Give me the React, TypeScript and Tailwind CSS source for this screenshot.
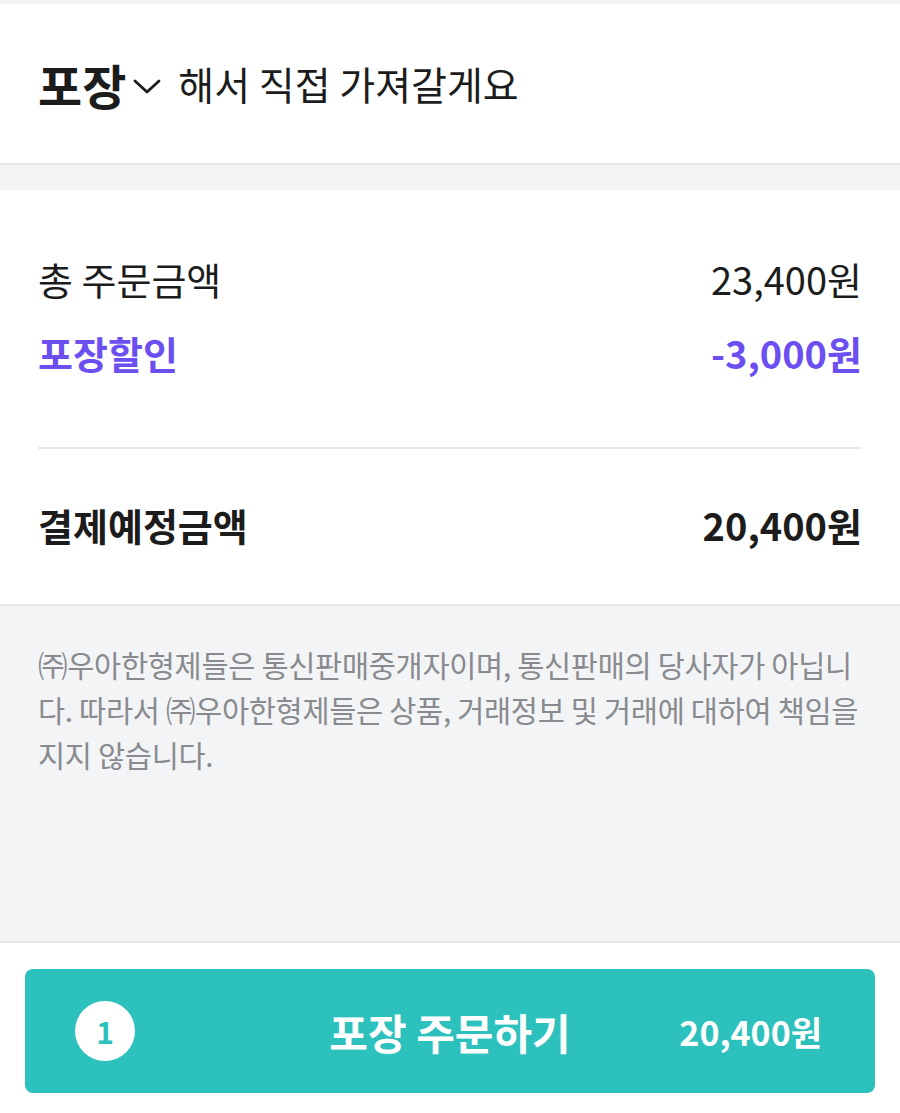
import React from 'react';

const font = { fontFamily: '"Noto Sans CJK KR", "Noto Sans", sans-serif' };

const Row: React.FC<{ label: string; value: string; className?: string }> = ({ label, value, className }) => (
  <div className={`flex justify-between items-center h-[46px] text-[38px] ${className ?? ''}`}>
    <span>{label}</span>
    <span>{value}</span>
  </div>
);

const notice = [
  '㈜우아한형제들은 통신판매중개자이며, 통신판매의 당사자가 아닙니',
  '다. 따라서 ㈜우아한형제들은 상품, 거래정보 및 거래에 대하여 책임을',
  '지지 않습니다.',
];

const App: React.FC = () => {
  return (
    <div className="w-[900px] h-[1113px] bg-[#f3f4f6] overflow-hidden" style={font}>
      <div className="h-[4px]" />

      {/* 포장 선택 */}
      <div className="h-[161px] bg-white border-b-2 border-[#e6e7e9] flex items-center px-[38px] text-[#1c1c1c]">
        <span className="text-[48px] font-bold leading-none">포장</span>
        <svg width="30" height="18" viewBox="0 0 30 18" className="ml-[6px] mr-[16px] mt-[6px]">
          <path d="M3 3 L15 14 L27 3" fill="none" stroke="#1c1c1c" strokeWidth="2.8" strokeLinecap="round" strokeLinejoin="round" />
        </svg>
        <span className="text-[39px] leading-none">해서 직접 가져갈게요</span>
      </div>

      <div className="h-[25px]" />

      {/* 금액 */}
      <div className="bg-white px-[38px] pt-[65px] pb-[57px] border-b-2 border-[#e6e7e9] text-[#1c1c1c]">
        <Row label="총 주문금액" value="23,400원" />
        <Row label="포장할인" value="-3,000원" className="mt-[28px] font-bold text-[#6b4ff0]" />
        <div className="mt-[72px] h-[2px] bg-[#e8e9eb]" />
        <Row label="결제예정금액" value="20,400원" className="mt-[52px] font-bold" />
      </div>

      {/* 안내 */}
      <div className="h-[337px] px-[38px] pt-[36px] border-b-2 border-[#e6e7e9]">
        <p className="text-[29.5px] leading-[45px] text-[#888a8e] tracking-[-0.3px]">
          {notice.map(line => (
            <span key={line} className="block whitespace-nowrap">{line}</span>
          ))}
        </p>
      </div>

      {/* 주문 버튼 */}
      <div className="bg-white h-[170px] px-[25px] pt-[26px]">
        <button className="w-full h-[124px] rounded-[8px] bg-[#2cc1bc] grid grid-cols-[1fr_auto_1fr] items-center px-[50px] text-white">
          <span className="w-[60px] h-[60px] rounded-full bg-white text-[#2cc1bc] text-[30px] font-bold flex items-center justify-center">1</span>
          <span className="text-[42px] font-bold">포장 주문하기</span>
          <span className="justify-self-end text-[34px] font-bold mr-[3px]">20,400원</span>
        </button>
      </div>
    </div>
  );
};

export default App;
